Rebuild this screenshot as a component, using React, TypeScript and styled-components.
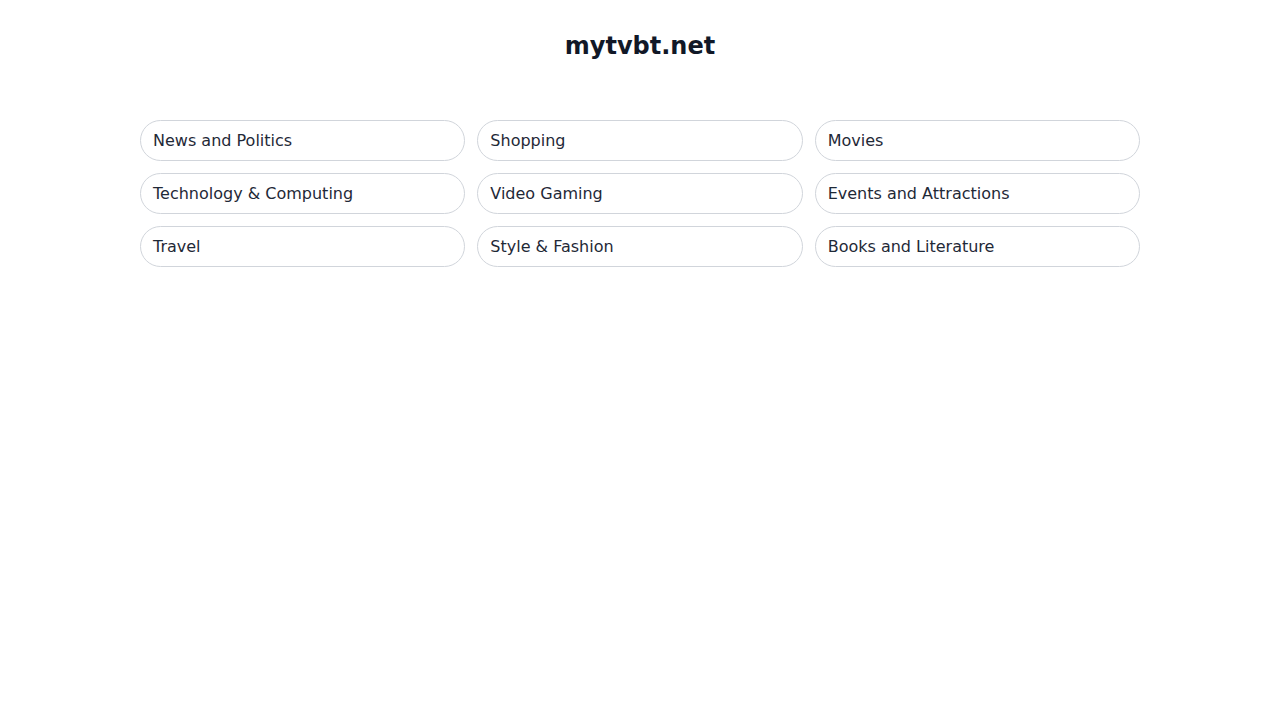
import styled, { createGlobalStyle } from 'styled-components';

const GlobalStyle = createGlobalStyle`
	body {
		margin: 0;
		background: #ffffff;
		font-family: 'DejaVu Sans', 'Noto Sans', sans-serif;
		color: #1f2937;
	}
`;

const Page = styled.main`
	display: flex;
	flex-direction: column;
	align-items: center;
	padding: 32px 0 0;
`;

const Title = styled.h1`
	margin: 0 0 60px;
	font-size: 24px;
	font-weight: 700;
	line-height: 28px;
	color: #111827;
`;

const CategoryGrid = styled.div`
	display: grid;
	grid-template-columns: repeat(3, 1fr);
	gap: 12px;
	width: 1000px;
`;

const CategoryLink = styled.a`
	display: block;
	padding: 10px 12px;
	border: 1px solid #d1d5db;
	border-radius: 999px;
	font-size: 16px;
	line-height: 19px;
	color: #1f2937;
	text-decoration: none;
	background: #ffffff;
`;

const categories = [
	'News and Politics',
	'Shopping',
	'Movies',
	'Technology & Computing',
	'Video Gaming',
	'Events and Attractions',
	'Travel',
	'Style & Fashion',
	'Books and Literature',
];

const App = () => {
	return (
		<>
			<GlobalStyle />
			<Page>
				<Title>mytvbt.net</Title>
				<CategoryGrid>
					{categories.map((name) => (
						<CategoryLink key={name} href='#'>
							{name}
						</CategoryLink>
					))}
				</CategoryGrid>
			</Page>
		</>
	);
};

export default App;
